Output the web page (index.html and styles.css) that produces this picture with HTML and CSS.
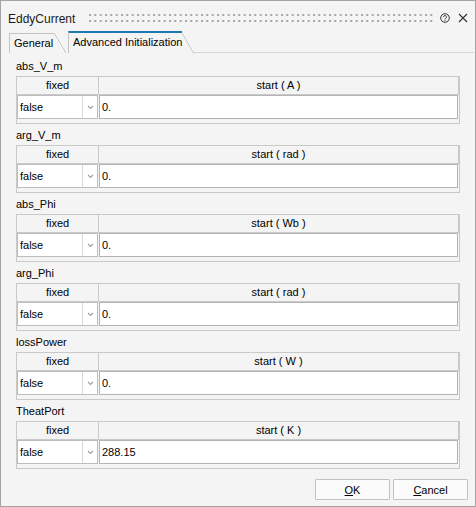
FILE: index.html
```html
<!DOCTYPE html>
<html>
<head>
<meta charset="utf-8">
<link rel="stylesheet" href="styles.css">
</head>
<body>
<div class="window">
  <div class="titlebar">
    <span class="title">EddyCurrent</span>
    <span class="grip"><svg width="100%" height="8"><defs><pattern id="dots" width="5.333" height="6" patternUnits="userSpaceOnUse"><rect x="0" y="0" width="2" height="2" fill="#a6a6a6"/></pattern></defs><rect x="0" y="0" width="100%" height="8" fill="url(#dots)"/></svg></span>
    <span class="icon help"><svg width="10" height="10" viewBox="0 0 10 10"><circle cx="5" cy="5" r="4.3" fill="none" stroke="#333" stroke-width="1"/><path d="M3.6 4 A1.45 1.45 0 1 1 5.6 5.3 Q5 5.6 5 6.3" fill="none" stroke="#333" stroke-width="0.9"/><rect x="4.5" y="6.9" width="1" height="1" fill="#333"/></svg></span>
    <span class="icon close"><svg width="10" height="10" viewBox="0 0 10 10"><path d="M1 1 L9 9 M9 1 L1 9" stroke="#333" stroke-width="1.1"/></svg></span>
  </div>
  <div class="tabs">
    <div class="tab general">General</div>
    <div class="tab active">Advanced Initialization</div>
    <div class="tabline"></div>
  </div>
  <div class="content">
    <section class="param">
      <div class="plabel">abs_V_m</div>
      <div class="ptable">
        <div class="thead"><div class="th fixed">fixed</div><div class="th start">start ( A )</div></div>
        <div class="trow"><div class="combo"><span class="cval">false</span><span class="carrow"><svg width="7" height="5" viewBox="0 0 7 5"><path d="M1 1 L3.5 3.5 L6 1" fill="none" stroke="#a0a0a0" stroke-width="1.2"/></svg></span></div><div class="input">0.</div></div>
      </div>
    </section>
    <section class="param">
      <div class="plabel">arg_V_m</div>
      <div class="ptable">
        <div class="thead"><div class="th fixed">fixed</div><div class="th start">start ( rad )</div></div>
        <div class="trow"><div class="combo"><span class="cval">false</span><span class="carrow"><svg width="7" height="5" viewBox="0 0 7 5"><path d="M1 1 L3.5 3.5 L6 1" fill="none" stroke="#a0a0a0" stroke-width="1.2"/></svg></span></div><div class="input">0.</div></div>
      </div>
    </section>
    <section class="param">
      <div class="plabel">abs_Phi</div>
      <div class="ptable">
        <div class="thead"><div class="th fixed">fixed</div><div class="th start">start ( Wb )</div></div>
        <div class="trow"><div class="combo"><span class="cval">false</span><span class="carrow"><svg width="7" height="5" viewBox="0 0 7 5"><path d="M1 1 L3.5 3.5 L6 1" fill="none" stroke="#a0a0a0" stroke-width="1.2"/></svg></span></div><div class="input">0.</div></div>
      </div>
    </section>
    <section class="param">
      <div class="plabel">arg_Phi</div>
      <div class="ptable">
        <div class="thead"><div class="th fixed">fixed</div><div class="th start">start ( rad )</div></div>
        <div class="trow"><div class="combo"><span class="cval">false</span><span class="carrow"><svg width="7" height="5" viewBox="0 0 7 5"><path d="M1 1 L3.5 3.5 L6 1" fill="none" stroke="#a0a0a0" stroke-width="1.2"/></svg></span></div><div class="input">0.</div></div>
      </div>
    </section>
    <section class="param">
      <div class="plabel">lossPower</div>
      <div class="ptable">
        <div class="thead"><div class="th fixed">fixed</div><div class="th start">start ( W )</div></div>
        <div class="trow"><div class="combo"><span class="cval">false</span><span class="carrow"><svg width="7" height="5" viewBox="0 0 7 5"><path d="M1 1 L3.5 3.5 L6 1" fill="none" stroke="#a0a0a0" stroke-width="1.2"/></svg></span></div><div class="input">0.</div></div>
      </div>
    </section>
    <section class="param">
      <div class="plabel">TheatPort</div>
      <div class="ptable">
        <div class="thead"><div class="th fixed">fixed</div><div class="th start">start ( K )</div></div>
        <div class="trow"><div class="combo"><span class="cval">false</span><span class="carrow"><svg width="7" height="5" viewBox="0 0 7 5"><path d="M1 1 L3.5 3.5 L6 1" fill="none" stroke="#a0a0a0" stroke-width="1.2"/></svg></span></div><div class="input">288.15</div></div>
      </div>
    </section>
  </div>
  <div class="buttons">
    <button class="btn"><u>O</u>K</button>
    <button class="btn"><u>C</u>ancel</button>
  </div>
</div>
</body>
</html>
```

FILE: styles.css
```css
html, body {
  margin: 0;
  padding: 0;
  background: #f4f4f4;
}

.window {
  width: 476px;
  height: 507px;
  box-sizing: border-box;
  border: 1px solid #a3a3a3;
  background: #f4f4f4;
  display: flex;
  flex-direction: column;
  font-family: "Liberation Sans", Arial, sans-serif;
  font-size: 11px;
  color: #000;
}

.titlebar {
  height: 30px;
  box-sizing: border-box;
  padding: 6px 7px 0 7px;
  display: flex;
  align-items: center;
}

.title {
  font-size: 12px;
  color: #1b1b1b;
  width: 81px;
  flex: none;
}

.grip {
  flex: 1;
  display: flex;
  height: 8px;
  margin-top: -2px;
}

.grip svg {
  display: block;
}

.icon {
  display: flex;
  width: 10px;
  height: 10px;
  margin-top: -2px;
}

.help {
  margin-left: 7px;
}

.close {
  margin-left: 8px;
}

.tabs {
  display: flex;
  align-items: flex-end;
  height: 22px;
  padding-left: 8px;
}

.tab {
  position: relative;
  box-sizing: border-box;
  border-left: 1px solid #c3c3c3;
  border-top: 1px solid #c3c3c3;
  padding-left: 4px;
  white-space: nowrap;
}

.tab::after {
  content: "";
  position: absolute;
  left: 100%;
  top: -1px;
  bottom: 0;
  width: 12px;
  background: linear-gradient(to top right, transparent calc(50% - 0.7px), #c0c0c0 50%, transparent calc(50% + 0.7px));
}

.tab.general {
  width: 45px;
  height: 20px;
  line-height: 19px;
  margin-right: 14px;
}

.tab.active {
  width: 114px;
  height: 22px;
  line-height: 19px;
  border-top: 2px solid #1f7ab4;
  margin-right: 12px;
}

.tab.active::after {
  top: 0;
  bottom: -1px;
}

.tabline {
  flex: 1;
  height: 22px;
  box-sizing: border-box;
  border-bottom: 1px solid #d6d6d6;
  margin-right: 1px;
}

.content {
  padding: 6px 15px 0 15px;
  display: flex;
  flex-direction: column;
  gap: 4px;
}

.param {
  display: flex;
  flex-direction: column;
  gap: 3px;
}

.plabel {
  height: 14px;
  line-height: 14px;
}

.ptable {
  height: 48px;
  box-sizing: border-box;
  border: 1px solid #c9c9c9;
}

.thead {
  display: flex;
  height: 18px;
  box-sizing: border-box;
  border-bottom: 1px solid #c9c9c9;
}

.th {
  line-height: 17px;
  text-align: center;
  box-sizing: border-box;
}

.th.fixed {
  width: 82px;
  border-right: 1px solid #c9c9c9;
}

.th.start {
  flex: 1;
  border-right: 1px solid #c9c9c9;
}

.trow {
  display: flex;
  height: 24px;
  gap: 1px;
  margin-right: 1px;
}

.combo {
  width: 81px;
  box-sizing: border-box;
  border: 1px solid #bdbdbd;
  background: #fff;
  display: flex;
}

.cval {
  box-sizing: content-box;
  padding-left: 2px;
  width: 62px;
  line-height: 22px;
  border-right: 1px solid #d9d9d9;
}

.carrow {
  flex: 1;
  display: flex;
  align-items: center;
  justify-content: center;
}

.input {
  flex: 1;
  box-sizing: border-box;
  border: 1px solid #b4b4b4;
  background: #fff;
  padding-left: 2px;
  line-height: 22px;
}

.buttons {
  display: flex;
  justify-content: flex-end;
  gap: 3px;
  margin-top: 10px;
  padding-right: 7px;
}

.btn {
  width: 75px;
  height: 21px;
  box-sizing: border-box;
  border: 1px solid #c2c2c2;
  border-radius: 1px;
  background: #fbfbfb;
  font-family: "Liberation Sans", Arial, sans-serif;
  font-size: 11px;
  color: #000;
  padding: 0;
}
```
